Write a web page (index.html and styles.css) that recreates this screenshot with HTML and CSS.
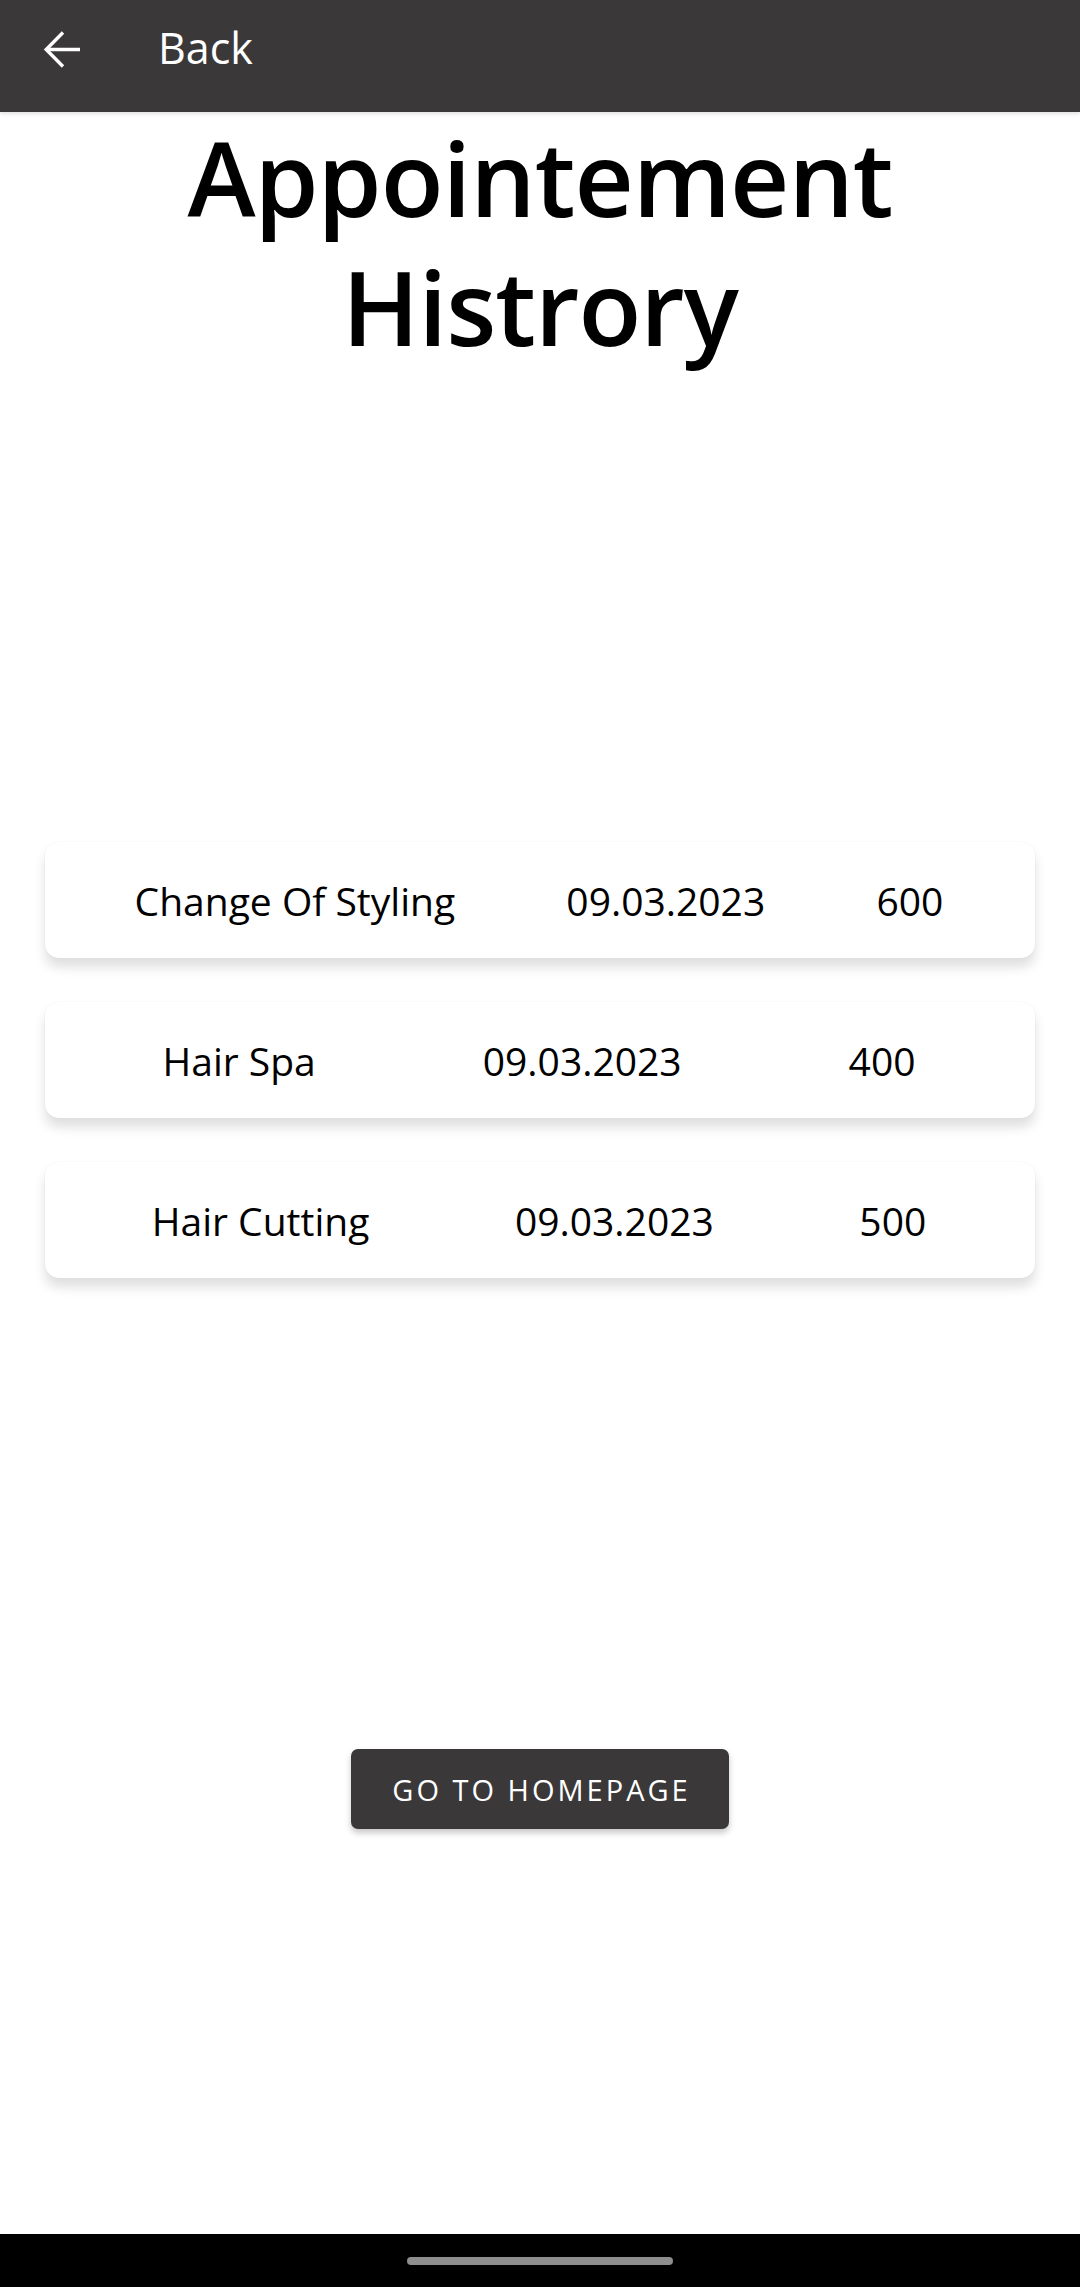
FILE: index.html
```
<!DOCTYPE html>
<html lang="en">
<head>
<meta charset="utf-8">
<title>Appointement Histrory</title>
<link rel="stylesheet" href="styles.css">
</head>
<body>
<div class="screen">
  <header class="bar">
    <svg class="back-icon" width="44" height="44" viewBox="0 0 44 44" aria-hidden="true">
      <path d="M6 22.5H40" fill="none" stroke="#fff" stroke-width="3.4"/>
      <path d="M23 5.5L6.2 22.5L23 39.5" fill="none" stroke="#fff" stroke-width="3.4"/>
    </svg>
    <span class="bar-title">Back</span>
  </header>

  <h1 class="title">Appointement<br>Histrory</h1>

  <section class="list">
    <div class="card">
      <span class="cell">Change Of Styling</span>
      <span class="cell">09.03.2023</span>
      <span class="cell">600</span>
    </div>
    <div class="card">
      <span class="cell">Hair Spa</span>
      <span class="cell">09.03.2023</span>
      <span class="cell">400</span>
    </div>
    <div class="card">
      <span class="cell">Hair Cutting</span>
      <span class="cell">09.03.2023</span>
      <span class="cell">500</span>
    </div>
  </section>

  <div class="actions">
    <button class="home-btn">GO TO HOMEPAGE</button>
  </div>

  <footer class="navbar"><span class="pill"></span></footer>
</div>
</body>
</html>
```

FILE: styles.css
```
html, body {
  margin: 0;
  padding: 0;
  background: #ffffff;
}

body {
  font-family: "Open Sans", "Noto Sans", "DejaVu Sans", sans-serif;
  color: #000;
}

.screen {
  display: flex;
  flex-direction: column;
  min-height: 2287px;
}

.bar {
  height: 112px;
  background: #3a3839;
  display: flex;
  align-items: flex-start;
  padding-left: 40px;
  box-sizing: border-box;
  box-shadow: 0 2px 4px rgba(0, 0, 0, 0.12);
  position: relative;
  z-index: 1;
}

.back-icon {
  margin-top: 27px;
  flex: none;
}

.bar-title {
  color: #ffffff;
  font-size: 43px;
  line-height: 43px;
  margin-top: 26px;
  margin-left: 74px;
}

.title {
  margin: 1px 0 0;
  text-align: center;
  font-size: 103px;
  line-height: 129px;
  font-weight: 600;
  letter-spacing: -1px;
}

.list {
  margin-top: 471px;
  padding: 0 45px;
  display: flex;
  flex-direction: column;
  gap: 44px;
}

.card {
  height: 116px;
  background: #fff;
  border-radius: 14px;
  box-shadow: 0 9px 12px rgba(0, 0, 0, 0.13), 0 0 2px rgba(0, 0, 0, 0.06);
  display: flex;
  align-items: center;
  padding: 0 36px 0 34px;
  font-size: 39px;
}

.cell {
  flex: 1 1 auto;
  text-align: center;
  white-space: nowrap;
}

.actions {
  margin-top: 471px;
  display: flex;
  justify-content: center;
}

.home-btn {
  height: 80px;
  width: 378px;
  background: #3a3839;
  color: #fff;
  border: none;
  border-radius: 7px;
  font-family: "Open Sans", "Noto Sans", sans-serif;
  font-size: 29px;
  letter-spacing: 3px;
  padding: 0 0 0 3px;
  box-shadow: 0 4px 6px rgba(0, 0, 0, 0.22);
}

.navbar {
  margin-top: auto;
  height: 53px;
  background: #000;
  display: flex;
  justify-content: center;
  align-items: flex-start;
}

.pill {
  margin-top: 23px;
  width: 266px;
  height: 8px;
  border-radius: 4px;
  background: #8e8e8e;
}
```
